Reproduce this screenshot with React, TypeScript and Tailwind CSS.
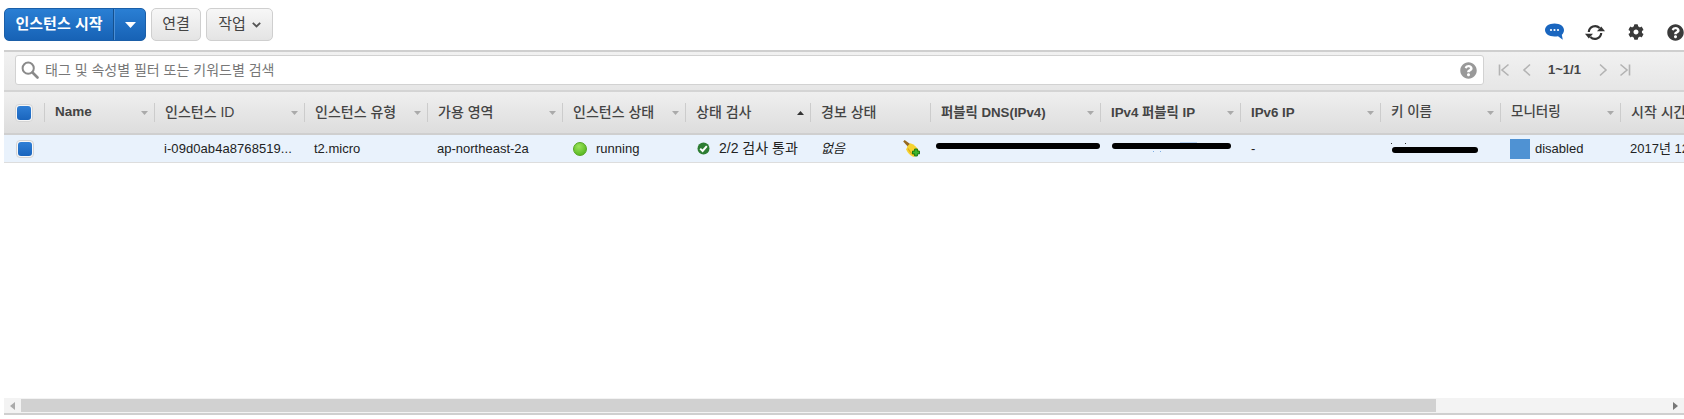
import React from 'react';
import { FaCog, FaQuestionCircle } from 'react-icons/fa';

const FONT = "font-['Liberation_Sans','Noto_Sans_CJK_KR',sans-serif]";

type Column = {
  label: string;
  width: string;
  sort?: 'none' | 'asc';
  text: string;
};

const columns: Column[] = [
  { label: 'Name', width: 'w-[110px]', sort: 'none', text: 'text-[13.5px] font-bold' },
  { label: '인스턴스 ID', width: 'w-[150px]', sort: 'none', text: 'text-[14px] font-medium' },
  { label: '인스턴스 유형', width: 'w-[123px]', sort: 'none', text: 'text-[14px] font-medium' },
  { label: '가용 영역', width: 'w-[135px]', sort: 'none', text: 'text-[14px] font-medium' },
  { label: '인스턴스 상태', width: 'w-[123px]', sort: 'none', text: 'text-[14px] font-medium' },
  { label: '상태 검사', width: 'w-[125px]', sort: 'asc', text: 'text-[14px] font-medium' },
  { label: '경보 상태', width: 'w-[120px]', text: 'text-[14px] font-medium' },
  { label: '퍼블릭 DNS(IPv4)', width: 'w-[170px]', sort: 'none', text: 'text-[13.3px] font-bold' },
  { label: 'IPv4 퍼블릭 IP', width: 'w-[140px]', sort: 'none', text: 'text-[13.3px] font-bold' },
  { label: 'IPv6 IP', width: 'w-[140px]', sort: 'none', text: 'text-[13.3px] font-bold' },
  { label: '키 이름', width: 'w-[120px]', sort: 'none', text: 'text-[13.5px] font-medium' },
  { label: '모니터링', width: 'w-[120px]', sort: 'none', text: 'text-[13.5px] font-medium' },
  { label: '시작 시간', width: 'w-[120px]', text: 'text-[14px] font-medium' },
];

const Checkbox = () => (
  <span className="flex h-[18px] w-[18px] items-center justify-center rounded-[4px] border border-[#d4d4d4] bg-[#f7f7f7]">
    <span className="h-[14px] w-[14px] rounded-[3px] bg-gradient-to-b from-[#2f7fd6] to-[#1a65bd]" />
  </span>
);

const Caret = ({ up, color, w = 9, h = 5 }: { up?: boolean; color: string; w?: number; h?: number }) => (
  <svg width={w} height={h} viewBox="0 0 9 5" preserveAspectRatio="none" className="shrink-0">
    <path d={up ? 'M0 5 L4.5 0 L9 5 Z' : 'M0 0 L9 0 L4.5 5 Z'} fill={color} />
  </svg>
);

const SearchIcon = () => (
  <svg width="18" height="18" viewBox="0 0 18 18" className="shrink-0">
    <circle cx="7.2" cy="7.2" r="5.6" fill="none" stroke="#8a8a8a" strokeWidth="2" />
    <path d="M11.5 11.5 L16.5 16.5" stroke="#8a8a8a" strokeWidth="2.6" strokeLinecap="round" />
  </svg>
);

const ChatIcon = () => (
  <svg width="20" height="18" viewBox="0 0 20 18">
    <path
      d="M9.5 0.5 C15 0.5 19 3.3 19 7 C19 9.2 18 10.8 16.8 11.8 L17.8 16.8 L13 13.2 C11.9 13.4 10.7 13.5 9.5 13.5 C4 13.5 0 10.7 0 7 C0 3.3 4 0.5 9.5 0.5 Z"
      fill="#1a66bf"
    />
    <circle cx="6" cy="7" r="1.1" fill="#fff" />
    <circle cx="9.5" cy="7" r="1.1" fill="#fff" />
    <circle cx="13" cy="7" r="1.1" fill="#fff" />
  </svg>
);

const RefreshIcon = () => (
  <svg width="20" height="17" viewBox="0 0 20 17" fill="none">
    <path d="M3.8 8 A6.3 6.3 0 0 1 14.6 4" stroke="#333" strokeWidth="2.2" />
    <path d="M16.2 9 A6.3 6.3 0 0 1 5.4 13" stroke="#333" strokeWidth="2.2" />
    <path d="M12 7.2 L20 7.2 L16.2 2.4 Z" fill="#333" />
    <path d="M0 9.8 L8 9.8 L3.8 14.6 Z" fill="#333" />
  </svg>
);

const PagerIcon = ({ d }: { d: string }) => (
  <svg width="12" height="14" viewBox="0 0 12 14" fill="none" className="shrink-0">
    <path d={d} stroke="#b3b3b3" strokeWidth="1.6" />
  </svg>
);

const BroomIcon = () => (
  <svg width="18" height="18" viewBox="0 0 18 18">
    <path d="M0.2 1.4 L1.6 0 L7.8 4.6 L5.4 7.2 Z" fill="#96691f" />
    <path d="M4.8 5.8 L7.4 3.2 C10.5 4.2 14.2 7.2 16 10.8 L11.2 17 C8 16.4 4.4 13 3.2 9.2 Z" fill="#f6d32f" />
    <path d="M5 8.4 C6.4 11.2 8.4 13.6 10.8 15" stroke="#e0a91a" strokeWidth="1.2" fill="none" />
    <path
      d="M11.6 9 H14.4 V11.1 H16.5 V13.9 H14.4 V16 H11.6 V13.9 H9.5 V11.1 H11.6 Z"
      fill="#3fb52c"
      stroke="#14700f"
      strokeWidth="0.9"
    />
  </svg>
);

const CheckBadge = () => (
  <svg width="13" height="13" viewBox="0 0 13 13" className="shrink-0">
    <circle cx="6.5" cy="6.5" r="6" fill="#2d7d32" />
    <path d="M3.2 6.6 L5.6 9 L9.8 4.2" fill="none" stroke="#fff" strokeWidth="2" />
  </svg>
);

const Redaction = ({ className }: { className: string }) => (
  <span className={`block rounded-full bg-black ${className}`} />
);

const Toolbar = () => (
  <div className="flex h-[50px] items-start pt-2">
    <div className="ml-1 flex h-[33px] w-[142px] rounded-[5px] border border-[#1b5fa8] bg-gradient-to-b from-[#2a7fd4] to-[#1762b5] text-[15px] font-bold text-white">
      <span className="flex w-[109px] items-center justify-center border-r border-[#14508f]">인스턴스 시작</span>
      <span className="flex flex-1 items-center justify-center border-l border-[#4b8fd6]">
        <Caret color="#fff" w={11} h={6} />
      </span>
    </div>
    <button className="ml-[5px] h-[33px] w-[50px] rounded-[5px] border border-[#cfcfcf] bg-gradient-to-b from-[#f7f7f7] to-[#e4e4e4] text-[15px] text-[#444]">
      연결
    </button>
    <button className="ml-[5px] flex h-[33px] w-[67px] items-center justify-center gap-[6px] rounded-[5px] border border-[#cfcfcf] bg-gradient-to-b from-[#f7f7f7] to-[#e4e4e4] text-[15px] text-[#444]">
      작업
      <svg width="9" height="6" viewBox="0 0 9 6" fill="none">
        <path d="M0.8 0.8 L4.5 4.5 L8.2 0.8" stroke="#555" strokeWidth="1.8" />
      </svg>
    </button>
    <div className="ml-auto flex items-center pt-[15px]">
      <ChatIcon />
      <span className="ml-[20px] flex">
        <RefreshIcon />
      </span>
      <FaCog size={16} color="#3a3a3a" className="ml-[23px]" />
      <FaQuestionCircle size={17} color="#3a3a3a" className="ml-[23px]" />
    </div>
  </div>
);

const SearchBand = () => (
  <div className="ml-1 flex h-[42px] items-start border-t-2 border-b-2 border-t-[#cfcfcf] border-b-[#d4d4d4] bg-gradient-to-b from-[#f1f1f1] to-[#e6e6e6] pt-[3px]">
    <div className="ml-[11px] flex h-[30px] w-[1469px] items-center rounded-[3px] border border-[#d2d2d2] bg-white pl-[5px] pr-[6px]">
      <SearchIcon />
      <span className="ml-[6px] text-[14px] text-[#777]">태그 및 속성별 필터 또는 키워드별 검색</span>
      <FaQuestionCircle size={17} color="#999" className="ml-auto" />
    </div>
    <div className="flex h-[30px] items-center text-[13px] font-bold text-[#444]">
      <span className="ml-[14px] flex">
        <PagerIcon d="M1.5 1.5 V12.5 M10.5 1.5 L4 7 L10.5 12.5" />
      </span>
      <span className="ml-[11px] flex">
        <PagerIcon d="M9 1.5 L3 7 L9 12.5" />
      </span>
      <span className="ml-[15px] w-[33px]">1~1/1</span>
      <span className="ml-[16px] flex">
        <PagerIcon d="M3 1.5 L9 7 L3 12.5" />
      </span>
      <span className="ml-[10px] flex">
        <PagerIcon d="M10.5 1.5 V12.5 M1.5 1.5 L8 7 L1.5 12.5" />
      </span>
    </div>
  </div>
);

const HeaderRow = () => (
  <div className="ml-1 flex h-[43px] items-center border-b-2 border-[#cfcfcf] bg-gradient-to-b from-[#efefef] to-[#dddddd] text-[#444]">
    <div className="flex w-[40px] shrink-0 pl-[11px]">
      <Checkbox />
    </div>
    {columns.map((col) => (
      <div
        key={col.label}
        className={`flex h-[19px] shrink-0 items-center border-l border-[#cccccc] pl-[10px] pr-[6px] ${col.width}`}
      >
        <span className={`whitespace-nowrap ${col.text}`}>{col.label}</span>
        {col.sort === 'none' && (
          <span className="ml-auto">
            <Caret color="#aaa" w={7} h={4} />
          </span>
        )}
        {col.sort === 'asc' && (
          <span className="ml-auto">
            <Caret up color="#333" w={7} h={4} />
          </span>
        )}
      </div>
    ))}
  </div>
);

const DataRow = () => (
  <div className="ml-1 flex h-[28px] items-center border-b border-[#dddddd] bg-[#e9f2fc] text-[13px] text-[#222]">
    <div className="flex w-[40px] shrink-0 pl-[12px]">
      <Checkbox />
    </div>
    <div className="w-[110px] shrink-0" />
    <div className="w-[150px] shrink-0 pl-[10px] tracking-[0.07px]">i-09d0ab4a8768519...</div>
    <div className="w-[123px] shrink-0 pl-[10px]">t2.micro</div>
    <div className="w-[135px] shrink-0 pl-[10px]">ap-northeast-2a</div>
    <div className="flex w-[123px] shrink-0 items-center gap-[9px] pl-[11px]">
      <span className="h-[14px] w-[14px] rounded-full border border-[#55a51f] bg-[radial-gradient(circle_at_40%_30%,#9be45a,#47ad12)]" />
      running
    </div>
    <div className="flex w-[125px] shrink-0 items-center gap-[9px] pl-[12px] text-[14px]">
      <CheckBadge />
      2/2 검사 통과
    </div>
    <div className="flex w-[120px] shrink-0 items-center pl-[11px] pr-[9px]">
      <span className="italic">없음</span>
      <span className="ml-auto flex">
        <BroomIcon />
      </span>
    </div>
    <div className="w-[170px] shrink-0 pl-[6px]">
      <Redaction className="mb-[5px] h-[6px] w-[164px]" />
    </div>
    <div className="relative w-[140px] shrink-0 pl-[12px]">
      <Redaction className="mb-[5px] h-[6px] w-[119px]" />
      <span className="absolute left-[80px] top-[-1px] h-px w-[17px] bg-[#b5d0f0]" />
      <span className="absolute left-[53px] top-[8px] h-px w-px bg-[#7fb0e6]" />
      <span className="absolute left-[60px] top-[8px] h-px w-px bg-[#7fb0e6]" />
    </div>
    <div className="w-[140px] shrink-0 pl-[11px]">-</div>
    <div className="relative w-[120px] shrink-0 pl-[12px]">
      <Redaction className="mt-[3px] h-[6px] w-[86px]" />
      <span className="absolute left-[11px] top-[-1px] h-px w-px bg-[#333]" />
      <span className="absolute left-[25px] top-[-1px] h-px w-px bg-[#333]" />
    </div>
    <div className="flex w-[120px] shrink-0 items-center gap-[5px] pl-[10px]">
      <span className="h-[20px] w-[20px] bg-[#4f92d3]" />
      disabled
    </div>
    <div className="w-[120px] shrink-0 whitespace-nowrap pl-[10px]">2017년 12월</div>
  </div>
);

const Scrollbar = () => (
  <div className="ml-1 flex h-[17px] items-center border-b-2 border-[#cfcfcf] bg-[#f3f3f3]">
    <div className="flex w-[17px] justify-center">
      <svg width="5" height="8" viewBox="0 0 5 8">
        <path d="M5 0 V8 L0 4 Z" fill="#aaa" />
      </svg>
    </div>
    <div className="h-[13px] w-[1415px] bg-[#d1d1d1]" />
    <div className="ml-auto flex w-[11px]">
      <svg width="5" height="8" viewBox="0 0 5 8">
        <path d="M0 0 V8 L5 4 Z" fill="#777" />
      </svg>
    </div>
  </div>
);

export default function App() {
  return (
    <div className={`flex h-[419px] w-[1684px] flex-col overflow-hidden bg-white ${FONT}`}>
      <Toolbar />
      <SearchBand />
      <div className="overflow-hidden">
        <HeaderRow />
        <DataRow />
      </div>
      <div className="mt-auto mb-1">
        <Scrollbar />
      </div>
    </div>
  );
}
